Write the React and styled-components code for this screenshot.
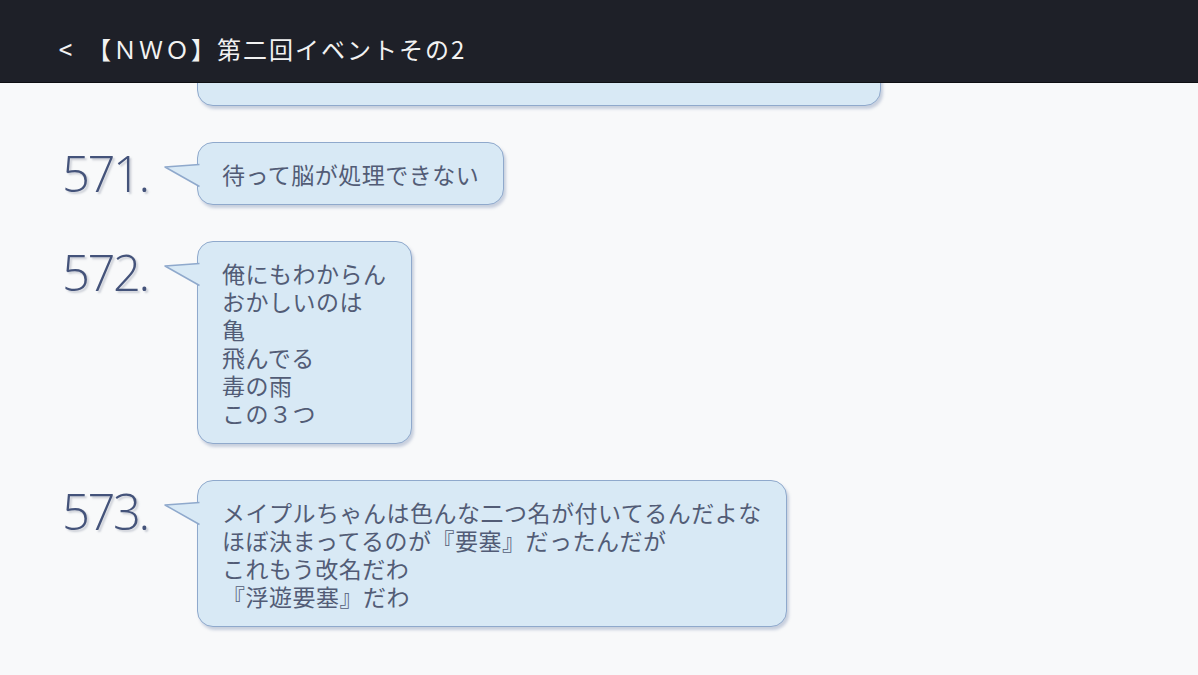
import React from 'react'
import styled, { createGlobalStyle } from 'styled-components'

const GlobalStyle = createGlobalStyle`
  html, body {
    margin: 0;
    padding: 0;
    background: #f8f9fa;
  }
  * { box-sizing: border-box; }
`;

const Screen = styled.div`
  width: 1198px;
  height: 675px;
  display: flex;
  flex-direction: column;
  overflow: hidden;
  background: #f8f9fa;
  font-family: "Noto Sans CJK JP", "Noto Sans", sans-serif;
`;

const Header = styled.header`
  flex: 0 0 83px;
  display: flex;
  align-items: center;
  padding: 14px 0 0 58px;
  background: #1e2028;
  border-bottom: 1px solid #0e0f13;
  position: relative;
  z-index: 2;
`;

const BackMark = styled.span`
  color: #f2f2f2;
  font-size: 27px;
  line-height: 1;
  margin-right: 14px;
  transform: scaleX(0.9);
`;

const Title = styled.h1`
  margin: 0;
  color: #f2f2f2;
  font-size: 24px;
  font-weight: 400;
  letter-spacing: 2px;
`;

const Body = styled.main`
  flex: 1;
  overflow: hidden;
`;

const Thread = styled.div`
  display: flex;
  flex-direction: column;
  gap: 36px;
  margin-top: -152px;
  padding-left: 62px;
`;

const Post = styled.div`
  display: flex;
  align-items: flex-start;
`;

const PostNo = styled.div`
  width: 135px;
  flex-shrink: 0;
  font-family: "Open Sans", "Noto Sans", sans-serif;
  font-weight: 300;
  font-size: 49px;
  line-height: 1;
  letter-spacing: -2.5px;
  color: #44537a;
  text-shadow: 2px 2px 2px rgba(120, 130, 150, 0.35);
  margin-top: 7px;
`;

const Bubble = styled.div`
  position: relative;
  width: fit-content;
  min-height: 40px;
  padding: 17px 24px 16px 24px;
  background: #d8e9f5;
  border: 1.5px solid #8fa9cc;
  border-radius: 16px;
  box-shadow: 2px 3px 3px rgba(110, 130, 170, 0.35);
  color: #525c76;
  font-size: 23px;
  line-height: 28px;
  letter-spacing: 0.5px;
  white-space: pre;
`;

const Tail = styled.svg`
  position: absolute;
  left: -35px;
  top: 19px;
  overflow: visible;
`;

const BubbleTail = () => (
  <Tail width="38" height="28" viewBox="0 0 38 28">
    <polygon points="2,5 38,2 38,25" fill="#d8e9f5" />
    <path d="M36.5,2.5 L2,5 L36.5,24.5" fill="none" stroke="#8fa9cc" strokeWidth="1.5" strokeLinejoin="round" />
  </Tail>
);

const posts = [
  { no: '', text: ' \n \n \n \n ', width: 684 },
  { no: '571.', text: '待って脳が処理できない' },
  { no: '572.', text: '俺にもわからん\nおかしいのは\n亀\n飛んでる\n毒の雨\nこの３つ' },
  { no: '573.', text: 'メイプルちゃんは色んな二つ名が付いてるんだよな\nほぼ決まってるのが『要塞』だったんだが\nこれもう改名だわ\n『浮遊要塞』だわ' },
];

const App = () => {
  return (
    <Screen>
      <GlobalStyle />
      <Header>
        <BackMark>&lt;</BackMark>
        <Title>【ＮＷＯ】第二回イベントその2</Title>
      </Header>
      <Body>
        <Thread>
          {posts.map((p, i) => (
            <Post key={i}>
              <PostNo>{p.no}</PostNo>
              <Bubble style={p.width ? { width: p.width } : undefined}>
                {p.no && <BubbleTail />}
                {p.text}
              </Bubble>
            </Post>
          ))}
        </Thread>
      </Body>
    </Screen>
  )
}

export default App
